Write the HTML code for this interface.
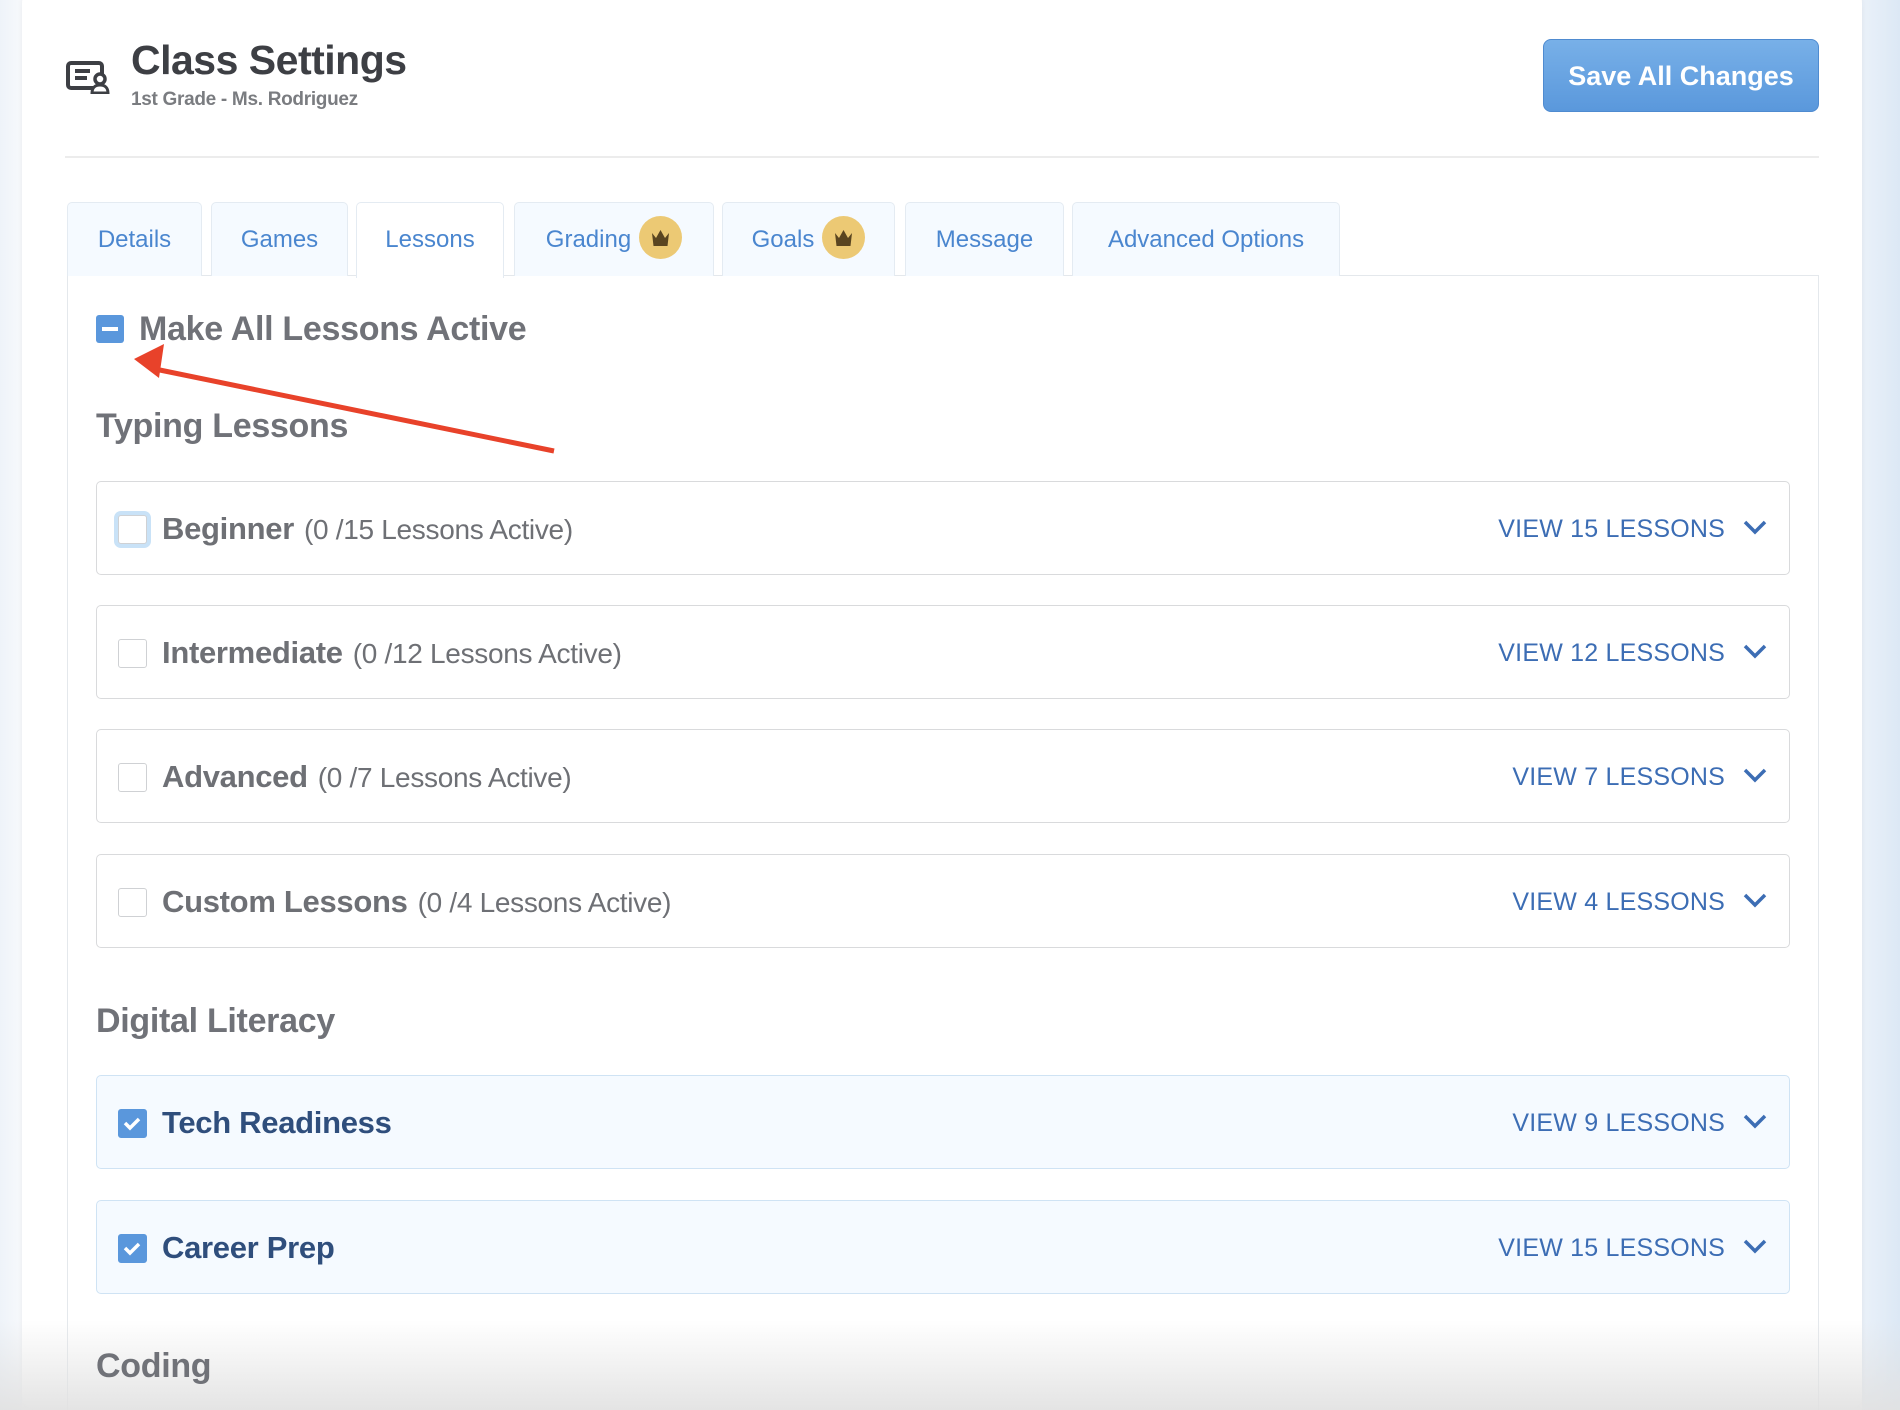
<!DOCTYPE html>
<html style="width:1900px;height:1410px;overflow:hidden"><head><meta charset="utf-8"><style>
*{box-sizing:border-box;margin:0;padding:0}
body{width:1900px;height:1410px;overflow:hidden;font-family:"Liberation Sans",sans-serif;background:linear-gradient(90deg,#eef3f9 0,#f7f9fc 22px,#fff 22px,#fff 1862px,#eaf1f9 1862px,#dce8f5 1900px);position:relative}
.card{position:absolute;left:22px;top:-10px;width:1840px;height:1420px;background:#fff;border-radius:14px;box-shadow:0 0 6px rgba(0,0,0,.06)}
.abs{position:absolute}
.title{left:131px;top:37px;font-size:41px;font-weight:bold;color:#3d3f44;letter-spacing:-0.5px}
.sub{left:131px;top:89px;font-size:19px;font-weight:bold;color:#7a7c80;letter-spacing:-0.3px}
.btn{left:1543px;top:39px;width:276px;height:73px;border-radius:8px;background:linear-gradient(#78b0e8,#5a98dc);border:1px solid #4f8bd0;color:#fff;font-size:27px;font-weight:bold;text-align:center;line-height:73px}
.hr{left:65px;top:156px;width:1754px;height:2px;background:#ececec}
.tab{position:absolute;top:202px;height:74px;background:#f5faff;border:1px solid #e4ebf2;border-bottom:none;border-radius:5px 5px 0 0;color:#4a86cf;font-size:24px;line-height:74px;text-align:center}
.tab.on{background:#fff;height:76px;z-index:2}
.crown{display:inline-block;width:43px;height:43px;border-radius:50%;background:#ecc974;vertical-align:middle;margin-left:8px;position:relative;top:-3px}
.panel{left:67px;top:275px;width:1752px;height:1135px;border:1px solid #e4e8ec;border-bottom:none;background:#fff}
.h{position:absolute;left:96px;font-size:34px;font-weight:bold;color:#707278;letter-spacing:-0.3px}
.row{position:absolute;left:96px;width:1694px;height:94px;border:1px solid #d9dadc;border-radius:5px;background:#fff}
.row.dl{background:#f5faff;border-color:#cfe3f4}
.cb{position:absolute;left:21px;top:33px;width:29px;height:29px;border:1.5px solid #cfd1d4;border-radius:3px;background:#fff}
.cb.chk{background:#5a97dc;border-color:#5a97dc}
.lbl{position:absolute;left:65px;top:29px;font-size:31px;font-weight:bold;color:#6e7075;white-space:nowrap;letter-spacing:-0.3px}
.lbl span{font-weight:normal;font-size:28px;margin-left:10px}
.dl .lbl{color:#2f4e7c}
.view{position:absolute;right:64px;top:33px;font-size:25px;color:#3c6db4;letter-spacing:0.2px}
.chev{position:absolute;right:22px;top:37px}
.fade{left:0;top:1320px;width:1900px;height:90px;background:linear-gradient(rgba(255,255,255,0),rgba(225,225,225,.9))}
</style></head><body>
<div class="card"></div>
<svg class="abs" style="left:66px;top:60px" width="44" height="34" viewBox="0 0 44 34"><rect x="2" y="3" width="34" height="25" rx="3" fill="none" stroke="#3d3f44" stroke-width="4"/><path d="M9 11h15M9 18h12" stroke="#3d3f44" stroke-width="4"/><circle cx="34" cy="19" r="5" fill="#fff" stroke="#3d3f44" stroke-width="3.5"/><path d="M26 33c0-6 4-8 8-8s8 2 8 8z" fill="#fff" stroke="#3d3f44" stroke-width="3"/></svg>
<div class="abs title">Class Settings</div>
<div class="abs sub">1st Grade - Ms. Rodriguez</div>
<div class="abs btn">Save All Changes</div>
<div class="abs hr"></div>
<div class="abs panel"></div>
<div class="tab" style="left:67px;width:135px">Details</div>
<div class="tab" style="left:211px;width:137px">Games</div>
<div class="tab on" style="left:356px;width:148px">Lessons</div>
<div class="tab" style="left:514px;width:200px">Grading<span class="crown"><svg width="43" height="43" viewBox="0 0 43 43"><path d="M13 16l4 5 4.5-8 4.5 8 4-5-1.5 13h-14z" fill="#5a4520"/></svg></span></div>
<div class="tab" style="left:722px;width:173px">Goals<span class="crown"><svg width="43" height="43" viewBox="0 0 43 43"><path d="M13 16l4 5 4.5-8 4.5 8 4-5-1.5 13h-14z" fill="#5a4520"/></svg></span></div>
<div class="tab" style="left:905px;width:159px">Message</div>
<div class="tab" style="left:1072px;width:268px">Advanced Options</div>
<div class="abs" style="left:96px;top:315px;width:28px;height:28px;background:#5a97dc;border-radius:3px"><div style="position:absolute;left:6px;top:12px;width:16px;height:4px;background:#fff"></div></div>
<div class="abs" style="left:139px;top:310px;font-size:34px;font-weight:bold;color:#707278;letter-spacing:-0.3px">Make All Lessons Active</div>
<svg class="abs" style="left:0;top:0" width="600" height="480"><line x1="554" y1="451" x2="150" y2="368" stroke="#e8422a" stroke-width="5"/><path d="M134 359l30-15-5 34z" fill="#e8422a"/></svg>
<div class="h" style="top:407px">Typing Lessons</div>
<div class="row" style="top:481px"><div class="cb" style="box-shadow:0 0 0 4px #c9e2f7"></div><div class="lbl">Beginner<span>(0 /15 Lessons Active)</span></div><div class="view">VIEW 15 LESSONS</div><svg class="chev" width="24" height="16"><path d="M2 3l10 10 10-10" fill="none" stroke="#3c6db4" stroke-width="3.5"/></svg></div>
<div class="row" style="top:605px"><div class="cb"></div><div class="lbl">Intermediate<span>(0 /12 Lessons Active)</span></div><div class="view">VIEW 12 LESSONS</div><svg class="chev" width="24" height="16"><path d="M2 3l10 10 10-10" fill="none" stroke="#3c6db4" stroke-width="3.5"/></svg></div>
<div class="row" style="top:729px"><div class="cb"></div><div class="lbl">Advanced<span>(0 /7 Lessons Active)</span></div><div class="view">VIEW 7 LESSONS</div><svg class="chev" width="24" height="16"><path d="M2 3l10 10 10-10" fill="none" stroke="#3c6db4" stroke-width="3.5"/></svg></div>
<div class="row" style="top:854px"><div class="cb"></div><div class="lbl">Custom Lessons<span>(0 /4 Lessons Active)</span></div><div class="view">VIEW 4 LESSONS</div><svg class="chev" width="24" height="16"><path d="M2 3l10 10 10-10" fill="none" stroke="#3c6db4" stroke-width="3.5"/></svg></div>
<div class="h" style="top:1002px">Digital Literacy</div>
<div class="row dl" style="top:1075px"><div class="cb chk"><svg width="26" height="26"><path d="M6 13l5 5 9-9" fill="none" stroke="#fff" stroke-width="3.5"/></svg></div><div class="lbl">Tech Readiness</div><div class="view">VIEW 9 LESSONS</div><svg class="chev" width="24" height="16"><path d="M2 3l10 10 10-10" fill="none" stroke="#3c6db4" stroke-width="3.5"/></svg></div>
<div class="row dl" style="top:1200px"><div class="cb chk"><svg width="26" height="26"><path d="M6 13l5 5 9-9" fill="none" stroke="#fff" stroke-width="3.5"/></svg></div><div class="lbl">Career Prep</div><div class="view">VIEW 15 LESSONS</div><svg class="chev" width="24" height="16"><path d="M2 3l10 10 10-10" fill="none" stroke="#3c6db4" stroke-width="3.5"/></svg></div>
<div class="abs fade"></div>
<div class="h" style="top:1347px">Coding</div>
</body></html>
